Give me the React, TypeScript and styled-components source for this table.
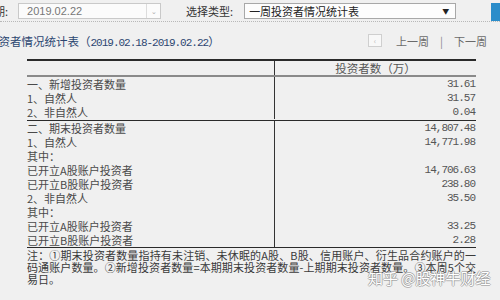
import React from "react";
import styled, { createGlobalStyle } from "styled-components";

const GlobalStyle = createGlobalStyle`
  html, body {
    margin: 0;
    padding: 0;
    background: #f0f0f0;
  }
  body {
    font-family: "Noto Sans CJK SC", "Noto Sans", sans-serif;
  }
`;

const Page = styled.div`
  position: relative;
  width: 500px;
  height: 300px;
  overflow: hidden;
  background: #f0f0f0;
  color: #4a4a4a;
`;

const TopBar = styled.div`
  display: flex;
  align-items: center;
  height: 20px;
  padding-top: 1px;
  border-bottom: 1px dotted #b8b8b8;
  font-size: 11px;
`;

const FieldLabel = styled.span<{ $offset?: number }>`
  margin-left: ${(p) => p.$offset ?? 0}px;
  color: #333;
  white-space: nowrap;
`;

const DateInput = styled.div`
  display: flex;
  align-items: stretch;
  width: 141px;
  height: 14px;
  margin-left: 10px;
  border: 1px solid #c9c9c9;
  background: #fbfbfb;
`;

const InputText = styled.span`
  flex: 1;
  padding-left: 8px;
  line-height: 14px;
  color: #777;
  font-family: "Liberation Sans", sans-serif;
  font-size: 11px;
`;

const ArrowCell = styled.span`
  width: 13px;
  border-left: 1px solid #dcdcdc;
  display: flex;
  align-items: center;
  justify-content: center;
  color: #aaa;
  font-size: 7px;
`;

const SelectBox = styled.div`
  display: flex;
  align-items: center;
  justify-content: space-between;
  width: 200px;
  height: 14px;
  margin-left: 11px;
  padding: 0 6px 0 4px;
  border: 1px solid #a8a8a8;
  background: #fdfdfd;
  color: #222;
`;

const SelectArrow = styled.span`
  font-size: 7px;
  color: #222;
`;

const BlueTab = styled.div`
  margin-left: auto;
  width: 9px;
  height: 18px;
  background: #2b8dca;
  align-self: flex-start;
  margin-top: 2px;
`;

const TitleRow = styled.div`
  display: flex;
  align-items: center;
  height: 37px;
`;

const Title = styled.div`
  margin-left: -13px;
  color: #2c4670;
  font-size: 11.5px;
  white-space: nowrap;
`;

const DateRange = styled.span`
  font-family: "Liberation Mono", monospace;
  font-size: 11px;
  letter-spacing: -1px;
`;

const Pager = styled.div`
  margin-left: auto;
  margin-right: 13px;
  display: flex;
  align-items: center;
  color: #6a6a6a;
  font-size: 11px;
`;

const PageBox = styled.span`
  width: 12px;
  height: 11px;
  border: 1px solid #cfcfcf;
  background: #f8f8f8;
  color: #bbb;
  font-size: 8px;
  display: flex;
  align-items: center;
  justify-content: center;
  margin-right: 14px;
`;

const PagerSep = styled.span`
  margin: 0 11px;
  color: #888;
`;

const Table = styled.div`
  margin-left: 27px;
  width: 449px;
  border-top: 2px solid #2a2a2a;
  border-bottom: 1px solid #2a2a2a;
  font-size: 11px;
`;

const Row = styled.div<{ $h?: number }>`
  display: grid;
  grid-template-columns: 247px 1fr;
  height: ${(p) => p.$h ?? 14}px;
  line-height: ${(p) => p.$h ?? 14}px;
`;

const LabelCell = styled.div`
  white-space: nowrap;
  color: #4a4a4a;
`;

const ValueCell = styled.div<{ $center?: boolean }>`
  border-left: 1px solid #333;
  text-align: ${(p) => (p.$center ? "center" : "right")};
  color: #555;
  font-family: ${(p) =>
    p.$center ? `"Noto Sans CJK SC", sans-serif` : `"Liberation Mono", monospace`};
  font-size: ${(p) => (p.$center ? "11.5px" : "11px")};
  letter-spacing: ${(p) => (p.$center ? "0" : "-1px")};
  padding-right: ${(p) => (p.$center ? 0 : 1)}px;
`;

const Header = styled.div`
  border-bottom: 2px solid #8a8a8a;
`;

const Group = styled.div<{ $last?: boolean }>`
  border-bottom: ${(p) => (p.$last ? "none" : "1px solid #2a2a2a")};
  padding-bottom: ${(p) => (p.$last ? 0 : 1)}px;
`;

const Notes = styled.div`
  margin-left: 27px;
  width: 449px;
  padding-top: 1px;
  font-size: 11px;
  line-height: 12px;
  color: #3a3a3a;
`;

const NoteLine = styled.div<{ $full?: boolean }>`
  white-space: nowrap;
  text-align: ${(p) => (p.$full ? "justify" : "left")};
  text-align-last: ${(p) => (p.$full ? "justify" : "auto")};
`;

// overlay watermark, white glyphs with a thin grey outline
const Watermark = styled.div`
  position: absolute;
  left: 368px;
  top: 270px;
  font-size: 15px;
  line-height: 15px;
  color: #ffffff;
  text-shadow: 1px 0 0 rgba(130, 130, 130, 0.55), -1px 0 0 rgba(130, 130, 130, 0.55),
    0 1px 0 rgba(130, 130, 130, 0.55), 0 -1px 0 rgba(130, 130, 130, 0.55);
  white-space: nowrap;
`;

type DataRow = { label: string; value?: string };

const groups: DataRow[][] = [
  [
    { label: "一、新增投资者数量", value: "31.61" },
    { label: "1、自然人", value: "31.57" },
    { label: "2、非自然人", value: "0.04" },
  ],
  [
    { label: "二、期末投资者数量", value: "14,807.48" },
    { label: "1、自然人", value: "14,771.98" },
    { label: "其中：" },
    { label: "已开立A股账户投资者", value: "14,706.63" },
    { label: "已开立B股账户投资者", value: "238.80" },
    { label: "2、非自然人", value: "35.50" },
    { label: "其中：" },
    { label: "已开立A股账户投资者", value: "33.25" },
    { label: "已开立B股账户投资者", value: "2.28" },
  ],
];

export default function App() {
  return (
    <Page>
      <GlobalStyle />
      <TopBar>
        <FieldLabel $offset={-17}>日期:</FieldLabel>
        <DateInput>
          <InputText>2019.02.22</InputText>
          <ArrowCell>⌄</ArrowCell>
        </DateInput>
        <FieldLabel $offset={25}>选择类型:</FieldLabel>
        <SelectBox>
          <span>一周投资者情况统计表</span>
          <SelectArrow>▼</SelectArrow>
        </SelectBox>
        <BlueTab />
      </TopBar>

      <TitleRow>
        <Title>
          投资者情况统计表（<DateRange>2019.02.18-2019.02.22</DateRange>）
        </Title>
        <Pager>
          <PageBox>‹</PageBox>
          <span>上一周</span>
          <PagerSep>|</PagerSep>
          <span>下一周</span>
        </Pager>
      </TitleRow>

      <Table>
        <Header>
          <Row $h={14}>
            <LabelCell />
            <ValueCell $center>投资者数（万）</ValueCell>
          </Row>
        </Header>
        {groups.map((rows, gi) => (
          <Group key={gi} $last={gi === groups.length - 1}>
            {rows.map((r, i) => (
              <Row key={i}>
                <LabelCell>{r.label}</LabelCell>
                <ValueCell>{r.value ?? ""}</ValueCell>
              </Row>
            ))}
          </Group>
        ))}
      </Table>

      <Notes>
        <NoteLine $full>
          注：①期末投资者数量指持有未注销、未休眠的A股、B股、信用账户、衍生品合约账户的一
        </NoteLine>
        <NoteLine $full>
          码通账户数量。②新增投资者数量=本期期末投资者数量-上期期末投资者数量。③本周5个交
        </NoteLine>
        <NoteLine>易日。</NoteLine>
      </Notes>

      <Watermark>知乎 @股神牛财经</Watermark>
    </Page>
  );
}
